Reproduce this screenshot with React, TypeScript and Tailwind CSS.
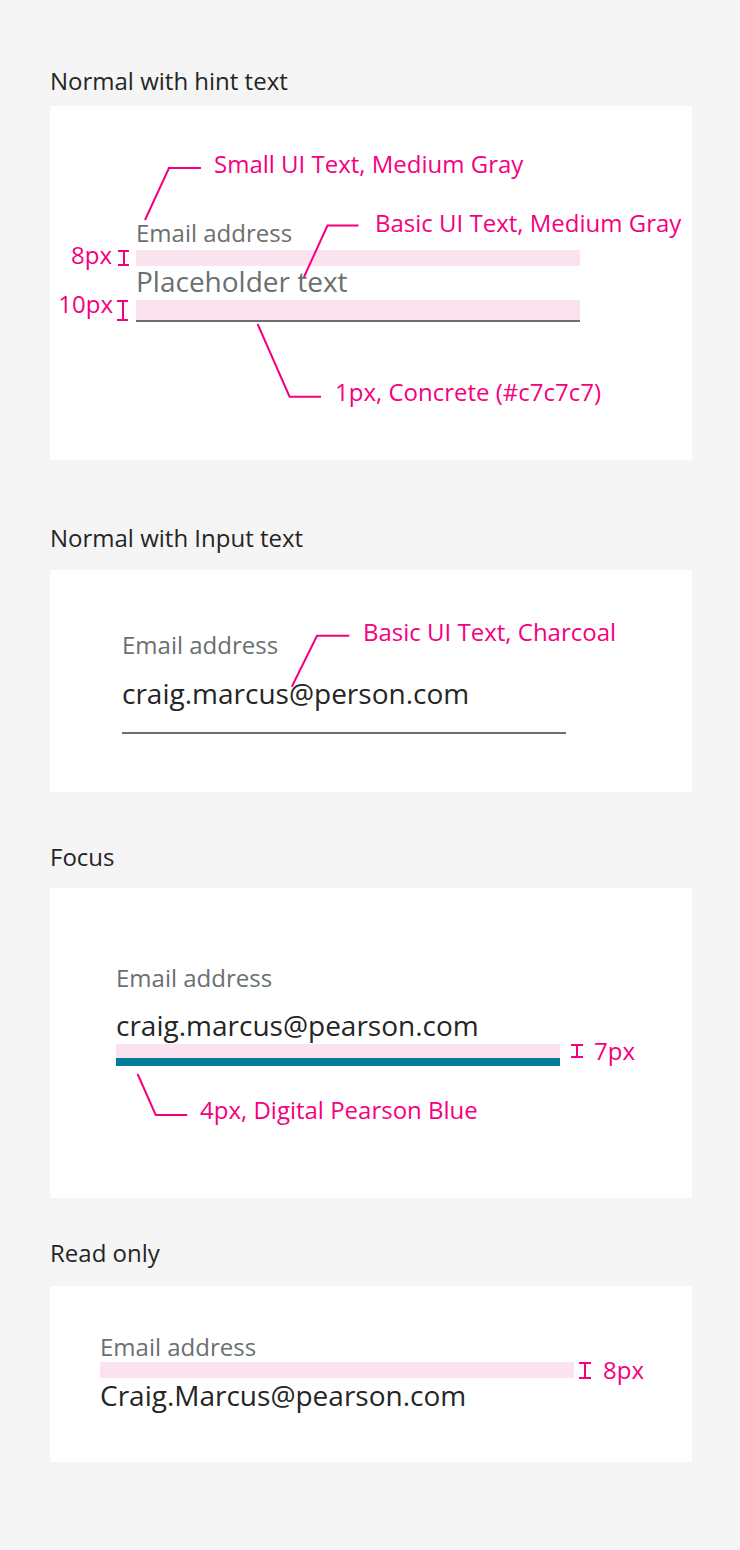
const PINK = '#f5007f';

function Ibeam({ className }: { className: string }) {
  return (
    <div className={`absolute flex flex-col items-center ${className}`}>
      <div className="h-[2px] w-full bg-[#f5007f]" />
      <div className="w-[2px] flex-1 bg-[#f5007f]" />
      <div className="h-[2px] w-full bg-[#f5007f]" />
    </div>
  );
}

function Leaders({ height, lines }: { height: number; lines: string[] }) {
  return (
    <svg
      className="pointer-events-none absolute left-0 top-0"
      width="642"
      height={height}
      fill="none"
      stroke={PINK}
      strokeWidth="2"
    >
      {lines.map((p) => (
        <polyline key={p} points={p} />
      ))}
    </svg>
  );
}

export default function App() {
  return (
    <div className="flex min-h-[1550px] flex-col bg-[#f5f5f5] pl-[50px] pr-[48px] pt-[65px] font-['Open_Sans',sans-serif] text-[#252525]">
      {/* Normal with hint text */}
      <section className="flex flex-col gap-[9px]">
        <h2 className="text-[24px] leading-8">Normal with hint text</h2>
        <div className="relative h-[354px] bg-white pl-[86px] pt-[115px]">
          <div className="flex w-[444px] flex-col">
            <p className="text-[24px] leading-6 text-[#6a7070]">Email address</p>
            <div className="mt-[5px] h-[16px] bg-[#fae3ee]" />
            <p className="h-[34px] text-[28px] leading-[30px] text-[#6a7070]">Placeholder text</p>
            <div className="h-[20px] bg-[#fae3ee]" />
            <div className="h-[2px] bg-[#6a7070]" />
          </div>

          <Leaders
            height={354}
            lines={['95,114 119,62 151,62', '254,171 277.5,119.5 308.5,119.5', '207.6,218 239.6,290.7 271,290.7']}
          />
          <p className="absolute left-[164px] top-[46px] whitespace-nowrap text-[24px] leading-6 text-[#f5007f]">
            Small UI Text, Medium Gray
          </p>
          <p className="absolute left-[325px] top-[105px] whitespace-nowrap text-[24px] leading-6 text-[#f5007f]">
            Basic UI Text, Medium Gray
          </p>
          <p className="absolute left-0 top-[137px] w-[62px] text-right text-[24px] leading-6 text-[#f5007f]">8px</p>
          <Ibeam className="left-[68px] top-[144px] h-[16px] w-[11px]" />
          <p className="absolute left-0 top-[186px] w-[63px] text-right text-[24px] leading-6 text-[#f5007f]">10px</p>
          <Ibeam className="left-[67px] top-[194px] h-[21px] w-[11px]" />
          <p className="absolute left-[285px] top-[274px] whitespace-nowrap text-[24px] leading-6 text-[#f5007f]">
            1px, Concrete (#c7c7c7)
          </p>
        </div>
      </section>

      {/* Normal with Input text */}
      <section className="mt-[62px] flex flex-col gap-[16px]">
        <h2 className="text-[24px] leading-8">Normal with Input text</h2>
        <div className="relative h-[222px] bg-white pl-[72px] pt-[63px]">
          <div className="flex w-[444px] flex-col">
            <p className="text-[24px] leading-6 text-[#6a7070]">Email address</p>
            <p className="mt-[19px] text-[28px] leading-[34px] text-[#252525]">craig.marcus@person.com</p>
            <div className="mt-[22px] h-[2px] bg-[#6a7070]" />
          </div>

          <Leaders height={222} lines={['241.8,116.7 267,65.7 299.3,65.7']} />
          <p className="absolute left-[313px] top-[50px] whitespace-nowrap text-[24px] leading-6 text-[#f5007f]">
            Basic UI Text, Charcoal
          </p>
        </div>
      </section>

      {/* Focus */}
      <section className="mt-[49px] flex flex-col gap-[15px]">
        <h2 className="text-[24px] leading-8">Focus</h2>
        <div className="relative h-[310px] bg-white pl-[66px] pt-[78px]">
          <div className="flex w-[444px] flex-col">
            <p className="text-[24px] leading-6 text-[#6a7070]">Email address</p>
            <p className="mt-[18px] text-[28px] leading-[34px] text-[#252525]">craig.marcus@pearson.com</p>
            <div className="mt-[2px] h-[14px] bg-[#fae3ee]" />
            <div className="h-[8px] bg-[#047a9c]" />
          </div>

          <Leaders height={310} lines={['87.6,186 105.7,227 137.3,227']} />
          <Ibeam className="left-[521px] top-[156px] h-[14px] w-[12px]" />
          <p className="absolute left-[544px] top-[151px] text-[24px] leading-6 text-[#f5007f]">7px</p>
          <p className="absolute left-[150px] top-[210px] whitespace-nowrap text-[24px] leading-6 text-[#f5007f]">
            4px, Digital Pearson Blue
          </p>
        </div>
      </section>

      {/* Read only */}
      <section className="mt-[39px] flex flex-col gap-[17px]">
        <h2 className="text-[24px] leading-8">Read only</h2>
        <div className="relative h-[176px] bg-white pl-[50px] pt-[49px]">
          <div className="flex w-[474px] flex-col">
            <p className="text-[24px] leading-6 text-[#6a7070]">Email address</p>
            <div className="mt-[3px] h-[16px] bg-[#fae3ee]" />
            <p className="text-[28px] leading-[34px] text-[#252525]">Craig.Marcus@pearson.com</p>
          </div>

          <Ibeam className="left-[529px] top-[76px] h-[17px] w-[12px]" />
          <p className="absolute left-[553px] top-[72px] text-[24px] leading-6 text-[#f5007f]">8px</p>
        </div>
      </section>
    </div>
  );
}
